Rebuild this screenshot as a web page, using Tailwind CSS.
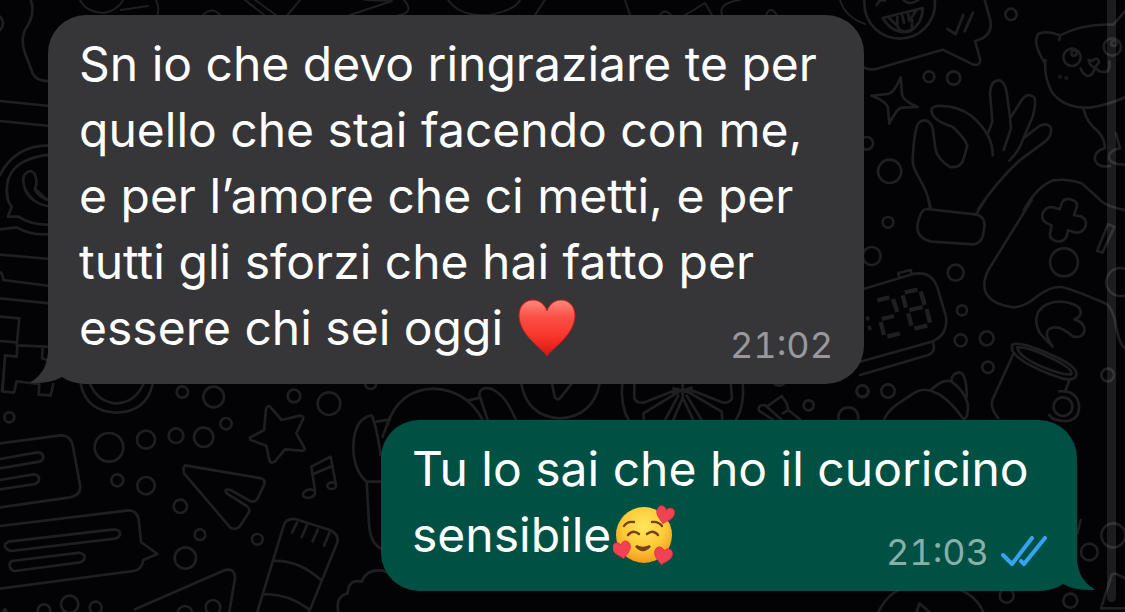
<!DOCTYPE html>
<html lang="it">
<head>
    <meta charset="UTF-8">
    <meta name="viewport" content="width=device-width, initial-scale=1.0">
    <title>Chat</title>
    <script src="https://cdn.jsdelivr.net/npm/@tailwindcss/browser@4"></script>
</head>
<body class="relative min-h-screen overflow-hidden bg-[#030305] font-['Inter',sans-serif] text-white">
    <!-- Doodle wallpaper -->
    <svg class="absolute inset-0 h-full w-full" viewBox="0 0 1125 612" preserveAspectRatio="xMidYMid slice" fill="none" stroke="#1f1f21" stroke-width="8" stroke-linecap="round" stroke-linejoin="round" aria-hidden="true">
        <!-- Right side, upper half: laughing face, star, hand, cat -->
        <g transform="translate(860 0) scale(.33333)">
            <circle cx="119" cy="10" r="106"/>
            <path d="M50 15Q60 -5 75 2M130 0Q150 18 175 0M68 54L188 24Q188 70 150 94Q100 105 68 54ZM88 55L112 78L112 48M126 44L132 68M144 40L148 62L170 30M112 78Q125 105 155 88L157 60"/>
            <path d="M262 87L287 102L310 45M314 94L339 38M374 0L391 60Q400 110 345 123L361 180Q360 198 340 194L248 149L45 208Q20 210 10 200"/>
            <circle cx="453" cy="43" r="17"/><circle cx="207" cy="230" r="16"/><circle cx="281" cy="234" r="20"/><circle cx="20" cy="430" r="19"/><circle cx="89" cy="514" r="35"/>
            <path d="M122 232L126 283Q128 302 173 321L125 323Q110 325 88 371L84 325Q82 305 35 287L84 282Q102 280 122 232Z"/>
            <path d="M212 624Q205 580 175 530Q158 500 158 480Q160 420 170 380Q178 358 200 362Q216 370 219 390L226 445Q230 475 270 501Q300 505 310 480L322 436Q315 415 278 380Q235 368 220 348Q205 322 230 318Q290 315 335 348Q400 405 398 466"/>
            <path d="M384 400L397 365L390 280Q392 240 418 241Q438 244 443 300Q450 340 453 385L431 450M454 350L485 300Q505 275 522 292Q530 305 518 350L484 430Q475 455 448 482M494 412L538 378Q560 366 572 382Q578 405 555 425L478 482Q410 545 355 627"/>
            <path d="M598 120L600 106Q555 90 535 102Q515 125 553 187L553 180M600 106Q670 70 760 74L795 34M557 180Q550 225 575 275Q610 325 690 323Q745 315 795 292"/>
            <circle cx="636" cy="172" r="26"/><circle cx="757" cy="141" r="26"/><circle cx="642" cy="159" r="8"/><circle cx="762" cy="130" r="8"/><circle cx="600" cy="230" r="2"/><circle cx="619" cy="234" r="2"/>
            <path d="M686 180Q700 185 702 178Q716 170 717 188L705 202Q690 200 686 180ZM705 202Q700 228 682 228Q668 222 662 205M705 202Q720 220 740 215Q752 205 748 185"/>
            <path d="M670 325Q680 370 715 395Q735 420 735 444Q700 455 705 480Q715 505 750 498M768 400L780 445Q745 450 747 475Q752 493 795 494"/>
        </g>
        <!-- Right side, middle: cuff, gamepad, clock, mug -->
        <g transform="translate(860 200) scale(.33333)">
            <path d="M205 0L211 27M375 0L348 43M200 27Q180 28 172 80Q172 115 215 125L340 133Q360 132 368 110L374 75Q372 45 345 43Z"/>
            <path d="M515 0L385 210Q365 250 378 280Q400 315 460 322Q495 320 530 290Q570 260 600 261Q625 262 740 312Q755 325 765 360Q775 430 795 445"/>
            <path d="M492 30Q530 -40 580 -59Q620 -65 665 -50Q710 -10 722 2Q740 20 795 30"/>
            <path d="M599 28L606 8Q615 -8 635 -1Q655 5 650 22L642 45L665 50Q682 60 677 78Q670 98 648 98L624 91L620 108Q612 127 590 124Q568 118 570 100L575 77L558 68Q542 58 548 40Q558 18 580 22Z"/>
            <circle cx="612" cy="187" r="42"/><circle cx="781" cy="246" r="42"/><path d="M744 73L764 80L727 158L711 152Z"/>
            <circle cx="84" cy="67" r="16"/><circle cx="35" cy="168" r="27"/><circle cx="287" cy="218" r="24"/><circle cx="306" cy="331" r="15"/><circle cx="302" cy="421" r="18"/><circle cx="380" cy="415" r="21"/><circle cx="384" cy="502" r="17"/><circle cx="84" cy="573" r="20"/><circle cx="8" cy="574" r="18"/><circle cx="743" cy="525" r="19"/>
            <path d="M0 270L160 222Q215 210 233 265L258 350Q265 405 215 425L0 485M117 230L115 219L152 210L155 221M220 430Q228 455 205 465L0 525"/>
            <g stroke-width="13" stroke-linecap="butt"><path d="M52 301L88 292M99 297L112 336M102 348L65 357M62 366L72 405M82 410L120 400M134 277L172 269M128 286L138 323M182 274L194 315M148 330L188 321M145 340L154 377M200 327L210 368M163 386L202 377M18 357L28 354M24 385L34 382"/></g>
            <path d="M72 660Q80 635 115 610L165 577Q195 560 230 580Q265 595 310 657Q325 655 324 615Q315 575 275 545Q250 535 212 570M275 541Q275 520 298 517Q320 520 320 590"/>
            <path d="M578 440L540 400Q520 365 535 335Q560 300 615 306Q665 315 662 340Q660 352 643 358Q672 365 674 390Q670 415 640 410Q595 370 568 387Q550 400 578 440Z"/>
            <path d="M456 435Q475 420 575 465Q655 500 649 525Q645 545 605 535Q475 490 456 450ZM472 442Q500 440 565 470Q640 505 634 522Q620 530 550 502Q475 470 472 442ZM460 462L397 600Q390 625 415 655M628 540L615 575M598 574Q650 570 657 615Q660 655 625 663Q580 665 568 645"/>
            <circle cx="609" cy="620" r="28"/>
        </g>
        <!-- Left bottom: speech bubbles -->
        <g transform="translate(0 370) scale(.33333)">
            <path d="M12 0L6 64L42 68L50 34L118 42L116 74L152 76L160 42M0 220L175 197Q210 192 218 225L240 345Q245 375 210 382L0 412M0 267L112 247Q130 248 130 262Q128 273 118 275L0 295M0 330L100 313Q118 314 117 328Q116 339 105 342L0 358"/>
            <path d="M0 468L385 421Q410 420 416 448L423 516L472 552L430 570Q425 600 400 603L0 656M25 515L342 478Q362 480 360 495Q355 504 345 506L32 543Q12 535 15 523ZM35 573L240 548Q255 552 254 563Q252 573 240 577L45 603Q28 602 29 580Z"/>
            <path d="M242 42Q260 125 350 128Q440 125 458 42M270 42Q295 98 350 100Q405 98 430 42"/>
            <circle cx="28" cy="142" r="15"/><circle cx="547" cy="66" r="17"/><circle cx="327" cy="232" r="43"/><circle cx="438" cy="209" r="27"/><circle cx="528" cy="197" r="22"/><circle cx="352" cy="331" r="18"/><circle cx="438" cy="347" r="26"/><circle cx="541" cy="409" r="20"/><circle cx="556" cy="564" r="32"/><circle cx="209" cy="703" r="26"/><circle cx="132" cy="722" r="19"/><circle cx="287" cy="713" r="18"/><circle cx="555" cy="730" r="22"/><circle cx="15" cy="722" r="4"/>
        </g>
        <!-- Left bottom: paper plane, star, notes, sock -->
        <g transform="translate(190 370) scale(.33333)">
            <circle cx="71" cy="81" r="31"/><circle cx="41" cy="202" r="29"/><circle cx="108" cy="161" r="17"/><circle cx="312" cy="78" r="19"/><circle cx="417" cy="101" r="34"/><circle cx="30" cy="494" r="16"/><circle cx="202" cy="508" r="16"/><circle cx="69" cy="712" r="22"/><circle cx="542" cy="40" r="17"/>
            <path d="M240 110L275 150L330 137Q344 138 338 150L319 190L344 235Q345 243 335 242L285 238L255 274Q240 283 238 270L229 227L182 210Q175 203 185 200L222 180L228 118Q232 105 240 110Z"/>
            <path d="M-15 286L215 325Q228 332 222 345L203 385Q195 398 182 394L122 360Q100 355 110 370L170 408Q183 417 175 430L150 468Q138 482 122 474L-18 310Q-22 290 -15 286Z"/>
            <path d="M375 362L364 290L422 260L438 345M369 313L428 287"/><ellipse cx="357" cy="371" rx="19" ry="12" transform="rotate(-15 357 371)"/><ellipse cx="425" cy="347" rx="13" ry="10"/>
            <path d="M202 726L280 470Q285 445 315 447L420 480Q450 495 441 520L357 726M252 573Q325 570 390 628M225 673Q290 670 355 716M321 458L306 488M351 464L335 502M384 478L368 514M418 488L402 527"/>
            <path d="M572 335L530 335Q490 300 490 230Q492 145 545 136Q560 170 572 255M560 155L600 148M600 140L578 200M530 335L537 460Q540 520 575 537"/>
            <path d="M-165 718L100 602Q135 590 135 625L118 726M445 726Q435 680 473 670Q475 625 515 635Q530 595 580 602L610 615"/>
        </g>
        <!-- Left edge -->
        <g transform="scale(.33333)">
            <path d="M92 0Q108 40 78 85Q60 115 75 160L98 220Q110 245 150 243M0 303L150 318M0 363L150 378M0 525Q45 435 150 436M24 600Q0 480 150 464M140 600L105 565Q115 545 103 520Q88 505 73 525Q60 560 100 600"/><circle cx="-18" cy="70" r="27"/>
        </g>
        <g transform="translate(0 190) scale(.33333)">
            <path d="M20 0Q20 35 35 50L24 80L55 80Q100 108 150 103M75 0Q95 40 150 50M105 0Q120 25 150 30M0 118L50 112Q95 138 150 132M0 194L150 207M0 247Q8 250 10 270L150 288M0 325L150 340M0 380L58 385L50 466L140 470M0 453L50 457M52 470L50 500L15 496L8 600M128 470L126 505L140 510"/>
        </g>
        <!-- Strip between the bubbles -->
        <g transform="translate(390 375) scale(.33333)">
            <path d="M-8 150Q25 45 130 41Q230 45 278 135M232 77L270 68M293 135L268 60Q270 35 300 40Q345 55 378 135"/>
            <path d="M393 22Q410 125 510 130Q610 125 630 22M485 22L494 65Q500 78 510 70L548 22M697 22Q690 90 716 135M1058 22Q1065 90 1038 135"/>
            <path d="M733 22L733 70Q740 85 760 83L865 42M1022 22L1026 70Q1018 85 1000 83L895 42M875 45L760 115L762 135M865 62L825 135M878 68L850 135M878 68L910 135M890 62L935 135M885 45L995 110L997 135M878 15L878 68M850 40L905 55M905 38L850 55"/>
            <path d="M1150 135L1108 108Q1100 90 1125 90L1175 135M1135 92L1175 63L1190 85L1195 105L1178 115M1195 105L1232 135"/>
            <circle cx="1256" cy="91" r="15"/><circle cx="1417" cy="48" r="17"/><circle cx="1375" cy="127" r="30"/><circle cx="1167" cy="12" r="20"/>
        </g>
        <!-- Top strip -->
        <g stroke-width="2">
            <path d="M80 0Q86 12 104 13Q118 10 123 0M121 10L148 6M156 0Q160 8 157 16M203 15Q212 6 220 15M245 0L268 18M255 0L280 18M300 0L285 18M350 15L392 1L365 0M404 0Q416 13 396 16M448 0Q460 17 490 15Q515 10 520 0M535 15L545 0M625 0L630 15M660 15Q665 8 671 15M685 15L705 3L712 15M722 15Q718 3 740 0M766 15Q770 5 777 15M840 0Q845 17 865 24"/>
        </g>
        <!-- Bottom right corner -->
        <g transform="translate(870 520) scale(.33333)">
            <path d="M632 0L622 40M25 276Q60 205 130 198M230 200Q310 210 340 276M140 276L148 250L178 276M693 265L725 165Q730 158 742 163L765 175M693 265L765 265"/>
            <circle cx="658" cy="96" r="25"/><circle cx="730" cy="46" r="36"/><circle cx="410" cy="227" r="21"/><circle cx="601" cy="242" r="21"/>
        </g>
    </svg>

    <main class="relative flex flex-col gap-9 pt-[15px] pr-12 pb-5 pl-12">
        <!-- Incoming message -->
        <article class="relative grid w-[816px] max-w-full self-start rounded-[38px] bg-[#363638] px-[31px] pt-4 pb-[23px]">
            <svg class="absolute bottom-0 -left-[18px] h-10 w-14" viewBox="0 0 56 40" fill="#363638" aria-hidden="true">
                <path d="M18 0V8C17 22 12 31 1 38Q-1 39 4 39Q22 39 32 33Q40 39 56 40L40 0Z"/>
            </svg>
            <p class="relative col-start-1 row-start-1 text-[48px] leading-[66px]">Sn io che devo ringraziare te per<br>quello che stai facendo con me,<br>e per l’amore che ci metti, e per<br>tutti gli sforzi che hai fatto per<br>essere chi sei oggi
                <svg class="inline-block h-[60px] w-[60px] align-[-13px]" viewBox="0 0 60 60" role="img" aria-label="cuore rosso">
                    <defs>
                        <linearGradient id="heart" x1="0" y1="0" x2="0" y2="1">
                            <stop offset="0" stop-color="#ff8a7c"/>
                            <stop offset=".3" stop-color="#fb5047"/>
                            <stop offset=".65" stop-color="#f8352b"/>
                            <stop offset="1" stop-color="#d8160f"/>
                        </linearGradient>
                    </defs>
                    <path d="M30 58C25 50 3 38 2 18C2 7 9 2 16 2C23 2 28 7 30 13C32 7 37 2 44 2C51 2 58 7 58 18C57 38 35 50 30 58Z" fill="url(#heart)" stroke="#c9201b" stroke-width="1"/>
                </svg>
            </p>
            <time datetime="21:02" class="relative col-start-1 row-start-1 self-end justify-self-end text-[36px] leading-8 text-[#98989d] tabular-nums">21:02</time>
        </article>

        <!-- Outgoing message -->
        <article class="relative grid w-[696px] max-w-full self-end rounded-[38px] bg-[#005044] pt-4 pr-[30px] pb-[23px] pl-[31px]">
            <svg class="absolute -right-[18px] bottom-0 h-10 w-14" viewBox="0 0 56 40" fill="#005044" aria-hidden="true">
                <path d="M38 0V8C39 22 44 31 55 38Q57 39 52 39Q34 39 24 33Q16 39 0 40L16 0Z"/>
            </svg>
            <p class="relative col-start-1 row-start-1 text-[48px] leading-[66px]">Tu lo sai che ho il cuoricino<br>sensibile<svg class="ml-0.5 inline-block h-[62px] w-[62px] align-[-14px]" viewBox="0 0 62 62" role="img" aria-label="faccina con cuoricini">
                    <defs>
                        <radialGradient id="face" cx=".5" cy=".35" r=".65">
                            <stop offset="0" stop-color="#ffe65c"/>
                            <stop offset=".6" stop-color="#fdc937"/>
                            <stop offset="1" stop-color="#f29a1d"/>
                        </radialGradient>
                        <path id="mini" d="M0 9C-2 6-9 3-9-3C-9-9-2-10 0-5C2-10 9-9 9-3C9 3 2 6 0 9Z"/>
                    </defs>
                    <circle cx="31" cy="31" r="28" fill="url(#face)"/>
                    <g fill="none" stroke="#754018" stroke-width="2.4" stroke-linecap="round">
                        <path d="M11 22Q14 17 21 18M39 18Q45 17 49 22M15 31Q20 25 26 30M34 30Q40 25 45 31"/>
                        <path d="M23 42Q30 50 37 42Q30 46 23 42Z" fill="#754018"/>
                    </g>
                    <g fill="#f04252" stroke="#cf2e3c" stroke-width=".7">
                        <use href="#mini" transform="translate(52 11) rotate(14)"/>
                        <use href="#mini" transform="translate(9 46) rotate(-12)"/>
                        <use href="#mini" transform="translate(50 52) rotate(12)"/>
                    </g>
                </svg>
            </p>
            <div class="relative col-start-1 row-start-1 flex items-center gap-3 self-end justify-self-end text-[36px] leading-8 text-[#88afa8]">
                <time datetime="21:03" class="tabular-nums">21:03</time>
                <svg class="h-8 w-[46px]" viewBox="0 0 46 32" fill="none" stroke="#35a2f6" stroke-width="4" stroke-linecap="round" stroke-linejoin="round" role="img" aria-label="Letto">
                    <path d="M2 19L11 28L31 2M20 25L23 28L44 2"/>
                </svg>
            </div>
        </article>
    </main>

    <!-- Scroll indicator -->
    <div class="absolute top-0 right-[9px] bottom-[10px] w-[9px] rounded-b-full bg-white/10"></div>
</body>
</html>
